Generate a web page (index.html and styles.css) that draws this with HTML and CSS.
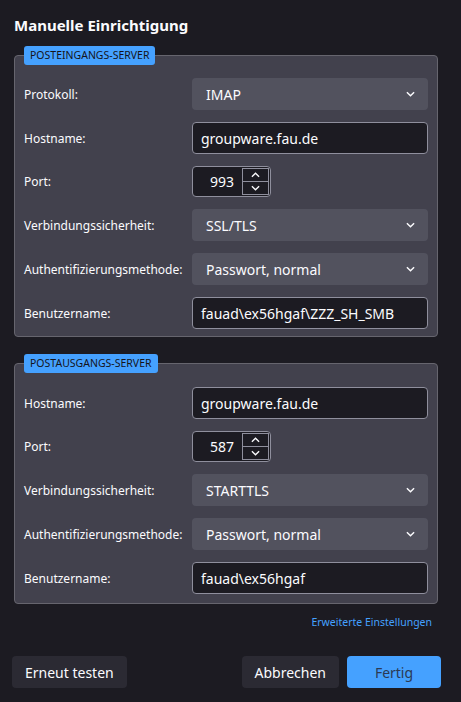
FILE: index.html
```html
<!DOCTYPE html>
<html lang="de">
<head>
<meta charset="utf-8">
<title>Manuelle Einrichtigung</title>
<link rel="stylesheet" href="styles.css">
</head>
<body>
<main class="page">
  <h1 class="title">Manuelle Einrichtigung</h1>

  <section class="group group-in">
    <div class="legend">POSTEINGANGS-SERVER</div>
    <div class="form">
      <label class="lbl">Protokoll:</label>
      <div class="select"><span>IMAP</span><svg class="chev" viewBox="0 0 10 6"><path d="M1 1l4 4 4-4" /></svg></div>

      <label class="lbl">Hostname:</label>
      <div class="input">groupware.fau.de</div>

      <label class="lbl">Port:</label>
      <div class="port"><span class="port-val">993</span><div class="spin"><div class="spin-btn"><svg viewBox="0 0 10 6"><path d="M1 5l4-4 4 4" /></svg></div><div class="spin-btn"><svg viewBox="0 0 10 6"><path d="M1 1l4 4 4-4" /></svg></div></div></div>

      <label class="lbl">Verbindungssicherheit:</label>
      <div class="select"><span>SSL/TLS</span><svg class="chev" viewBox="0 0 10 6"><path d="M1 1l4 4 4-4" /></svg></div>

      <label class="lbl">Authentifizierungsmethode:</label>
      <div class="select"><span>Passwort, normal</span><svg class="chev" viewBox="0 0 10 6"><path d="M1 1l4 4 4-4" /></svg></div>

      <label class="lbl">Benutzername:</label>
      <div class="input">fauad\ex56hgaf\ZZZ_SH_SMB</div>
    </div>
  </section>

  <section class="group group-out">
    <div class="legend">POSTAUSGANGS-SERVER</div>
    <div class="form">
      <label class="lbl">Hostname:</label>
      <div class="input">groupware.fau.de</div>

      <label class="lbl">Port:</label>
      <div class="port"><span class="port-val">587</span><div class="spin"><div class="spin-btn"><svg viewBox="0 0 10 6"><path d="M1 5l4-4 4 4" /></svg></div><div class="spin-btn"><svg viewBox="0 0 10 6"><path d="M1 1l4 4 4-4" /></svg></div></div></div>

      <label class="lbl">Verbindungssicherheit:</label>
      <div class="select"><span>STARTTLS</span><svg class="chev" viewBox="0 0 10 6"><path d="M1 1l4 4 4-4" /></svg></div>

      <label class="lbl">Authentifizierungsmethode:</label>
      <div class="select"><span>Passwort, normal</span><svg class="chev" viewBox="0 0 10 6"><path d="M1 1l4 4 4-4" /></svg></div>

      <label class="lbl">Benutzername:</label>
      <div class="input">fauad\ex56hgaf</div>
    </div>
  </section>

  <div class="link-row"><a class="link" href="#">Erweiterte Einstellungen</a></div>

  <div class="buttons">
    <button class="btn">Erneut testen</button>
    <div class="btn-group">
      <button class="btn">Abbrechen</button>
      <button class="btn btn-primary">Fertig</button>
    </div>
  </div>
</main>
</body>
</html>
```

FILE: styles.css
```css
html, body {
  margin: 0;
  padding: 0;
  background: #1c1b22;
  color: #fbfbfe;
  font-family: "Noto Sans", "Open Sans", sans-serif;
}

.page {
  width: 461px;
  height: 702px;
  box-sizing: border-box;
  padding: 0 23px 0 14px;
  display: flex;
  flex-direction: column;
}

.title {
  margin: 15px 0 0 0;
  font-size: 15px;
  line-height: 20px;
  font-weight: 700;
}

.group {
  position: relative;
  background: #42414d;
  border: 1px solid #66656e;
  border-radius: 4px;
  padding: 22px 9px 7px 9px;
}

.group-in {
  margin-top: 20px;
}

.group-out {
  margin-top: 26px;
  padding-top: 23px;
  padding-bottom: 9px;
}

.legend {
  position: absolute;
  top: -10px;
  left: 9px;
  height: 19px;
  line-height: 19px;
  padding: 0 6px;
  background: #45a1ff;
  color: #15141a;
  border-radius: 3px;
  font-size: 10.5px;
}

.form {
  display: grid;
  grid-template-columns: 168px 1fr;
  row-gap: 12px;
  align-items: center;
}

.lbl {
  font-size: 12px;
  color: #fbfbfe;
}

.select {
  height: 32px;
  box-sizing: border-box;
  background: #52525e;
  border-radius: 4px;
  display: flex;
  align-items: center;
  justify-content: space-between;
  padding: 0 13px 0 14px;
  font-size: 14px;
}

.chev {
  width: 9px;
  height: 6px;
  fill: none;
  stroke: #fbfbfe;
  stroke-width: 1.6;
}

.input {
  height: 32px;
  box-sizing: border-box;
  background: #1c1b22;
  border: 1px solid #8f8f9d;
  border-radius: 4px;
  display: flex;
  align-items: center;
  padding: 0 8px;
  font-size: 14px;
}

.port {
  width: 79px;
  height: 31px;
  box-sizing: border-box;
  background: #1c1b22;
  border: 1px solid #8f8f9d;
  border-radius: 4px;
  display: flex;
  align-items: center;
  justify-content: space-between;
  font-size: 14px;
}

.port-val {
  flex: 1;
  text-align: right;
  padding-right: 8px;
}

.spin {
  width: 27px;
  height: 27px;
  margin-right: 1px;
  display: flex;
  flex-direction: column;
  border: 1px solid #8f8f9d;
  box-sizing: border-box;
}

.spin-btn {
  flex: 1;
  display: flex;
  align-items: center;
  justify-content: center;
}

.spin-btn + .spin-btn {
  border-top: 1px solid #8f8f9d;
}

.spin-btn svg {
  width: 9px;
  height: 6px;
  fill: none;
  stroke: #fbfbfe;
  stroke-width: 1.5;
}

.link-row {
  display: flex;
  justify-content: flex-end;
  margin-top: 11px;
  padding-right: 6px;
}

.link {
  color: #45a1ff;
  font-size: 10.5px;
  text-decoration: none;
}

.buttons {
  margin: 27px -3px 0 -2px;
  display: flex;
  justify-content: space-between;
}

.btn-group {
  display: flex;
  gap: 8px;
}

.btn {
  height: 32px;
  border: none;
  border-radius: 4px;
  background: #2b2a33;
  color: #fbfbfe;
  font-family: "Noto Sans", "Open Sans", sans-serif;
  font-size: 14px;
  padding: 0 13px;
}

.btn-primary {
  background: #45a1ff;
  color: #2b3a55;
  width: 94px;
}
```
